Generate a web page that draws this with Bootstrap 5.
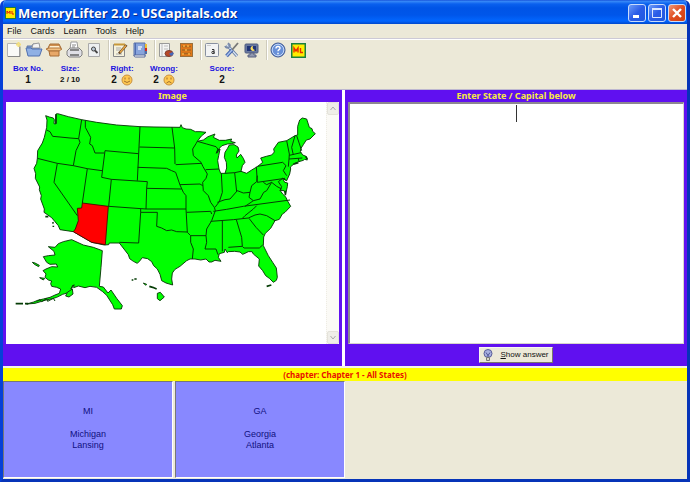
<!DOCTYPE html>
<html lang="en">
<head>
<meta charset="utf-8">
<meta name="viewport" content="width=device-width, initial-scale=1">
<title>MemoryLifter 2.0 - USCapitals.odx</title>
<link href="https://cdn.jsdelivr.net/npm/bootstrap@5.3.0/dist/css/bootstrap.min.css" rel="stylesheet">
<style>
:root{--face:#ece9d8;--violet:#6010f0}
body{font-family:"Liberation Sans",Arial,sans-serif;font-size:9px;line-height:11px;color:#111;background:#fff}
button{font:inherit;color:inherit}
.win{border:3px solid #0a48e0;border-top:0;border-left-color:#0640d8;border-right-color:#0634b8;border-bottom-color:#0634b8;border-radius:6px 6px 0 0;background:var(--face);overflow:hidden}
.titlebar{height:24px;margin:0 -3px;padding:2px 4px 0 5px;background:linear-gradient(#0a3fd0 0,#3b8cf8 1px,#0a60ee 4px,#0054e6 8px,#0056ea 15px,#0266fe 21px,#0148cc 24px)}
.titlebar h1{font-family:"Open Sans","Noto Sans",sans-serif;font-weight:700;font-size:13px;line-height:20px;color:#fff;text-shadow:1px 1px 0 #0a2a88;margin-left:2px}
.cap{width:18px;height:18px;padding:0;border:1px solid #c8dcfc;border-radius:3px;background:linear-gradient(135deg,#6c9cf8,#2a5ce8 50%,#2058e0)}
.cap.shut{background:linear-gradient(135deg,#f09878,#e04c20 50%,#d04010)}
.caps{gap:2px}
.cap svg,.tool svg,.face,.bulb,.sb svg{display:block}
.menus{height:15px;gap:9px;padding-left:4px;border-bottom:1px solid #cdcad6;box-shadow:0 1px #fff}
.menus button{border:0;padding:0;background:none}
.tools{height:23px;padding:1px 0 0 1px}
.tool{width:20px;height:20px;padding:1px;border:0;background:none}
.sep{width:6px;height:20px;border-right:1px solid #fff;background:linear-gradient(#cfcbbc,#cfcbbc) 4px 0/1px 100% no-repeat}
.scores{height:27px;padding:1px 0 0 3px;font-weight:700}
.scores dl{width:44px;text-align:center}
.scores dt{font-size:8px;color:#1a12e0;line-height:11px;white-space:nowrap}
.scores dd{font-size:10px;line-height:11px;margin:0}
.scores .mid{width:40px}
.scores .mid dd{font-size:8px}
.scores .wrong{width:40px}
.apart{margin-left:10px}
.panels{background:#fff;border-top:1px solid #bdb7d0;display:grid;grid-template-columns:113fr 114fr;gap:3px}
.pane{background:var(--violet);padding:0 3px;min-width:0}
.pane h2,.pane label{font-family:"Noto Sans",sans-serif;font-size:9px;font-weight:700;line-height:12px;color:#f8ec40;text-align:center;margin:0;display:block}
.photo{background:#fff}
.map{min-width:0}
.sb{width:13px;background:#fbfaf6;border-left:1px dotted #eeece4}
.sb button{width:12px;height:13px;padding:0;border:1px solid #e4e2da;background:#efeee8;border-radius:2px}
.answer{border:1px solid #d8d4cc;border-top:2px solid #8c8890;border-left:2px solid #8c8890;border-radius:0;resize:none;background:#fff;display:block;width:100%;height:100%;text-align:center;padding:2px;font-size:12px}
.answer:focus{outline:0}
.caret{position:absolute;top:3px;left:50%;width:1px;height:17px;background:#333}
.foot{height:22px}
.show{height:16px;padding:0 3px;background:var(--face);border:1px solid #f8f6ee;border-right-color:#78766c;border-bottom-color:#78766c;line-height:12px;gap:7px;font-size:8px}
.chapter{font-family:"Noto Sans",sans-serif;font-size:8px;background:#ff0;color:#e81000;font-weight:700;line-height:13px;border-top:2px solid #f4f2e8;text-align:center;height:15px}
.deck{padding-bottom:1px}
.cards{gap:2px}
.flash{height:97px;padding-bottom:3px;background:#8888ff;color:#101080;border:1px solid #777;border-right-color:#fff;border-bottom-color:#fff;text-align:center}
.flash p{margin:0 0 12px}
</style>
<script src="https://cdn.jsdelivr.net/npm/bootstrap@5.3.0/dist/js/bootstrap.bundle.min.js"></script>
</head>
<body>
<div class="win min-vh-100 d-flex flex-column">
  <header class="titlebar d-flex align-items-center">
    <svg width="11" height="12" viewBox="0 0 11 12" aria-hidden="true"><rect width="11" height="12" fill="#208030"/><rect x="1" y="1" width="9" height="10" fill="#ffe800"/><path d="M2 7V4l1.500 2L5 4v3M7 4v3h2" stroke="#e02000" fill="none"/></svg>
    <h1 class="mb-0 me-auto text-nowrap">MemoryLifter 2.0 - USCapitals.odx</h1>
    <div class="caps d-flex">
      <button class="cap" aria-label="Minimize"><svg width="16" height="16"><path d="M4 11.500h6" stroke="#fff" stroke-width="3"/></svg></button>
      <button class="cap" aria-label="Maximize"><svg width="16" height="16"><path d="M3.500 4.500h9v8h-9z" stroke="#dce8ff" fill="none"/><path d="M3 4h10" stroke="#dce8ff" stroke-width="2"/></svg></button>
      <button class="cap shut" aria-label="Close"><svg width="16" height="16"><path d="M4 4l8 8M12 4l-8 8" stroke="#fff" stroke-width="2.400"/></svg></button>
    </div>
  </header>

  <nav class="menus d-flex align-items-center" aria-label="Menu">
    <button>File</button><button>Cards</button><button>Learn</button><button>Tools</button><button>Help</button>
  </nav>

  <div class="tools d-flex" role="toolbar" aria-label="Tools">
    <button class="tool" aria-label="New"><svg width="18" height="18"><path d="M2.500 2.500h12v13h-12z" fill="#fafaf8" stroke="#b4b4b4"/><path d="M3 15.500h12v-10" stroke="#888" fill="none"/><path d="M13.500 1v5M11 3.500h5" stroke="#f4e080" stroke-width="2"/></svg></button>
    <button class="tool" aria-label="Open"><svg width="18" height="18"><path d="M2 5h5l1-2h6v10H3z" fill="#7c98cc" stroke="#6078a8"/><path d="M8 3l6-1 1 5H7z" fill="#f4f4f4" stroke="#999"/><path d="M1 7h5l1 1h10l-2.500 7H3z" fill="#90b0e4" stroke="#5070b0"/></svg></button>
    <button class="tool" aria-label="Pack"><svg width="18" height="18"><path d="M3 7l2-4h9l2 4z" fill="#d09050" stroke="#a87038"/><path d="M5 5h9l1 2H4z" fill="#fff0d0"/><path d="M1 8l3-1h11l2 1-3 2H4z" fill="#f4c080" stroke="#b07840"/><path d="M4 10h10v5H5z" fill="#e8a868" stroke="#a86c34"/></svg></button>
    <button class="tool" aria-label="Print"><svg width="18" height="18"><path d="M6 1h6l1 7H5z" fill="#fff" stroke="#999"/><path d="M2 10l3-3h9l3 3v4l-2 2H4l-2-2z" fill="#e0e0e6" stroke="#808080"/><path d="M5 9h9M5 14h9" stroke="#666" stroke-width="1.300"/><path d="M7 4h4M7 6h3" stroke="#888"/></svg></button>
    <button class="tool" aria-label="Preview"><svg width="18" height="18"><path d="M3.500 2.500h11v13h-11z" fill="#eef0f2" stroke="#aaa"/><circle cx="8.500" cy="8" r="2" fill="#bcc8d8" stroke="#444"/><path d="M10 9.500l2.500 2.500" stroke="#444" stroke-width="1.800"/></svg></button>
    <span class="sep"></span>
    <button class="tool" aria-label="Edit card"><svg width="18" height="18"><path d="M2.500 3.500h11v12h-11z" fill="#f6f2dc" stroke="#888"/><path d="M3 3.500h11" stroke="#c89838" stroke-width="2"/><path d="M5 7h5M5 9h4M5 13h6" stroke="#aaa"/><path d="M15.500 4L8 12.500" stroke="#604020" stroke-width="2.600"/><path d="M15 4.500L9 11.500" stroke="#e8a848" stroke-width="1.500"/></svg></button>
    <button class="tool" aria-label="Dictionary"><svg width="18" height="18"><path d="M3 2h11v13H3z" fill="#88a4dc" stroke="#5870a8"/><path d="M3 14c0 2 1 2 2 2h9v-2z" fill="#fff" stroke="#566898"/><path d="M4.500 2v12" stroke="#506cb0"/><path d="M7 6h4M7 8h3" stroke="#e8eefc" stroke-width="1.500"/><path d="M15 3v4" stroke="#f0c030" stroke-width="2"/><path d="M15 7v3" stroke="#d02820" stroke-width="2"/><path d="M15 10v3" stroke="#506ca8" stroke-width="2"/></svg></button>
    <span class="sep"></span>
    <button class="tool" aria-label="Statistics"><svg width="18" height="18"><path d="M2.500 2.500h10v13h-10z" fill="#f4f4f4" stroke="#999"/><path d="M5 3v12M7 5h4M7 8h4" stroke="#bbb"/><ellipse cx="12" cy="12.500" rx="4" ry="3" fill="#b84828" stroke="#804030"/><path d="M12 12.500l4-1.500a4 3 0 0 1-2 4z" fill="#4868b8"/></svg></button>
    <button class="tool" aria-label="Boxes"><svg width="18" height="18"><rect x="3.500" y="2.500" width="12" height="13" fill="#e07818" stroke="#98703c"/><path d="M5 5.500h9M5 9h9M5 12.500h9" stroke="#a86820" stroke-width="1.500"/><path d="M7 4v2M11 4v2M9 8v2M6 12v2M12 12v2" stroke="#f8b040" stroke-width="1.500"/></svg></button>
    <span class="sep"></span>
    <button class="tool" aria-label="Font"><svg width="18" height="18"><rect x="2.500" y="2.500" width="13" height="13" rx="1" fill="#f2f3f4" stroke="#8890a0"/><path d="M4 4.500h4" stroke="#ccc"/><circle cx="10" cy="11.500" r="1.200" fill="none" stroke="#333"/><path d="M9 8.500h2v4.500" fill="none" stroke="#333"/></svg></button>
    <button class="tool" aria-label="Options"><svg width="18" height="18"><path d="M4 4l10 11" stroke="#6078a0" stroke-width="3"/><path d="M4 4l10 11" stroke="#d8e4f4" stroke-width="1.300"/><path d="M15 2l-6 7" stroke="#777" stroke-width="1.800"/><path d="M9 9l-5.500 6" stroke="#4868b0" stroke-width="3.600"/><path d="M9 9l-5.500 6" stroke="#a8c0ec" stroke-width="1.400"/><path d="M2 5c1 3 5 2 5-1L5 2" fill="none" stroke="#7888a8" stroke-width="1.600"/></svg></button>
    <button class="tool" aria-label="Display"><svg width="18" height="18"><rect x="2" y="3" width="13" height="9" rx="1" fill="#6878a0" stroke="#505c80"/><path d="M4 5h9v5H4z" fill="#203478"/><path d="M10 5a2.500 2.500 0 1 0 2 4 3 3 0 0 1-2-4" fill="#ffe060"/><path d="M7 12h4v2h2v2H5v-2h2z" fill="#9098b0" stroke="#586080"/></svg></button>
    <span class="sep"></span>
    <button class="tool" aria-label="Help"><svg width="18" height="18"><circle cx="9" cy="9" r="7" fill="#6890d8" stroke="#405890"/><circle cx="9" cy="9" r="5.800" fill="none" stroke="#c4d8f8"/><path d="M7 7.500c0-2.600 4-2.600 4-.3C11 8.700 9 8.600 9 10.300M9 11.800v1.400" stroke="#fff" stroke-width="1.400" fill="none"/></svg></button>
    <button class="tool" aria-label="About MemoryLifter"><svg width="18" height="18"><rect x="2" y="2" width="15" height="15" fill="#188040"/><rect x="3.500" y="3.500" width="12" height="12" fill="#ffec00"/><path d="M5 11.500V7l2 3 2-3v4.500M11.500 7v4.500H14" stroke="#e83000" stroke-width="1.400" fill="none"/></svg></button>
  </div>

  <div class="scores d-flex">
    <dl class="mb-0"><dt>Box No.</dt><dd>1</dd></dl>
    <dl class="mb-0 mid"><dt>Size:</dt><dd>2 / 10</dd></dl>
    <dl class="mb-0 apart"><dt>Right:</dt><dd class="d-flex justify-content-center gap-1">2 <svg class="face" width="12" height="12" viewBox="0 0 12 12"><circle cx="6" cy="6" r="5" fill="#ffc850" stroke="#c89040"/><path d="M4 3.500v2M8 3.500v2M3 7q3 3 6 0" stroke="#a07030" fill="none"/></svg></dd></dl>
    <dl class="mb-0 wrong"><dt>Wrong:</dt><dd class="d-flex justify-content-center gap-1">2 <svg class="face" width="12" height="12" viewBox="0 0 12 12"><circle cx="6" cy="6" r="5" fill="#ffc850" stroke="#c89040"/><path d="M4 3.500v2M8 3.500v2M3.500 9q2.500-3 5 0" stroke="#a07030" fill="none"/></svg></dd></dl>
    <dl class="mb-0 ms-3"><dt>Score:</dt><dd>2</dd></dl>
  </div>

  <main class="panels flex-grow-1">
    <section class="pane d-flex flex-column">
      <h2>Image</h2>
      <div class="photo d-flex flex-grow-1">
        <svg class="map flex-grow-1" viewBox="18 309 960 726" preserveAspectRatio="xMinYMin meet" role="img" aria-label="Map of the United States with Arizona highlighted">
          <g fill="#00ff00" stroke="#063806" stroke-width="2.800" stroke-linejoin="round">
            <path d="M137 350L148 354 160 357 163 362 162 374 167 375 168 345 173 344 205 353 245 362 290 370 350 378 420 383 465 384 540 385 543 377 547 386 558 390 572 391 586 398 600 398 618 400 604 411 592 427 610 423 624 413 645 405 640 415 658 424 676 424 695 420 692 427 706 431 694 434 682 435 666 440 660 446 655 452 649 463 660 450 656 470 653 485 657 510 662 523 675 523 680 507 679 490 673 475 675 460 682 449 688 438 702 437 714 444 717 456 709 468 711 477 722 466 730 478 735 490 727 500 723 517 740 523 755 513 772 503 788 490 782 477 799 472 815 468 823 459 821 450 835 430 860 425 885 410 893 408 893 382 899 363 907 357 920 360 928 385 936 389 938 397 946 404 930 420 919 423 910 437 903 448 901 457 908 468 918 472 922 483 914 481 910 484 900 487 885 492 871 504 872 510 869 525 860 545 848 538 854 550 863 552 862 563 857 585 852 575 840 574 848 585 858 595 861 603 872 622 855 640 847 645 838 661 825 665 812 688 796 703 791 714 790 740 805 770 818 790 829 807 832 835 829 844 820 850 808 838 797 830 788 815 776 801 778 780 760 765 756 758 745 758 735 763 728 766 720 759 704 757 685 758 682 761 675 750 673 760 658 764 655 775 663 787 645 784 635 789 627 789 618 780 602 783 585 780 570 780 560 785 540 802 525 811 517 822 515 840 518 858 498 852 485 845 480 826 472 810 461 800 455 788 443 779 427 776 419 786 412 793 400 787 389 779 385 767 358 732 328 732 326 737 313 738 275 730 220 698 180 692 175 680 165 668 155 656 132 640 133 630 122 600 124 590 118 572 119 564 106 538 107 524 102 508 110 493 112 478 113 455 127 432 133 415 140 385 141 363Z"/>
            <path d="M145 743L165 745 175 734 190 728 215 722 250 738 280 745 307 755 303 805 298 862 310 864 324 882 333 873 350 898 367 920 364 930 343 930 338 917 320 889 308 878 290 865 270 862 255 866 235 861 221 866 222 857 215 868 215 875 198 883 188 886 170 895 157 899 138 903 125 907 105 913 80 915 101 909 113 904 130 900 150 895 165 888 178 883 182 870 170 865 155 862 152 854 155 846 145 843 135 835 138 825 129 815 138 810 155 803 173 804 169 795 150 796 140 790 130 773 145 770 165 768 162 757Z"/>
            <path d="M197 891L202 880 217 870 219 885 207 894ZM97 790L105 792 118 799 116 803 103 796ZM119 836L134 838 130 843ZM472 883L481 880 493 894 480 905 472 899ZM430 852L440 856 437 859Z"/>
          </g>
          <path fill="#ff0000" stroke="#400" stroke-width="2.500" d="M247 612L325 622 316 737 275 730 220 698 226 690 235 665 232 628 245 627Z"/>
          <g fill="none" stroke="#053c05" stroke-width="3" stroke-linejoin="round">
            <path d="M140 393L150 398 158 412 180 414 210 417 236 419M245 362L236 419 240 430 228 455 220 500M112 478L172 493 220 500 262 509 306 515M256 364L256 385 272 415 269 435 277 440 285 462 313 462M305 535L315 455 415 464M420 383L417 443 412 545M305 535L334 541 442 548 440 568 438 630M172 493L162 550 232 650M262 509L247 612M334 541L326 622M326 622L438 630 558 630M422 630L422 640 416 732 358 730M422 640L472 640 470 682 485 687 500 695 515 693 530 698 562 699M418 444L524 447M516 385L524 447 525 495M413 505L500 508 515 515 527 520 540 558 550 580 558 590 558 630 562 700M527 497L605 493M540 557L600 555 608 560M440 568L545 570M560 640L632 637 635 645M572 710L618 710M562 700L572 710 572 730 580 750 577 780"/>
            <path d="M592 427L588 434 578 450 580 470 603 490 609 503 622 525 618 538 608 550 610 575 625 590 632 610 643 625 646 635 635 665 620 690 618 710 620 730 615 750 648 750 654 767M617 512L657 510M592 427L620 435 648 443 655 452M664 523L667 580 658 608 645 625M704 521L710 578M675 523L704 521 723 517M652 610L675 602 690 600 712 575 730 582 750 580 755 560 770 548 772 530M769 503L772 550 855 538M772 502L848 490 858 500 850 515 860 530M750 580L747 595 760 605 780 600 791 580 800 575 815 550 800 557 790 550M760 605L750 612 735 622M640 637L680 631 730 622 870 603M632 667L700 662 745 657M770 620L760 630 735 650 728 657M745 657L765 648 780 645 800 650 825 665M747 658L768 685 790 708M667 665L667 757M709 662L725 715 727 742 685 745M727 742L732 747 778 747 788 738"/>
            <path d="M860 425L868 465 867 480 865 503M885 410L875 445 880 468M890 410L905 455M868 469L903 461M867 480L907 477M895 478L897 488M860 545L848 538 835 548 845 563 840 575M815 550L830 562 845 570"/>
            <path stroke-width="5" d="M47 914h22M75 914h10M395 843h5M403 840h7M448 862l10 3M458 865l12 5M136 653h9M157 673l4-3M160 680v4M800 862l14-4M880 496l15-5M168 346v28M917 472l5 8M856 575v14M655 450l-5 12"/>
            <path d="M110 907l10-5 5 6 15-9 3 8 17-9 5 8M212 870l7-12"/>
          </g>
        </svg>
        <div class="sb d-flex flex-column justify-content-between">
          <button aria-label="Scroll up"><svg width="10" height="11"><path d="M2.500 7L5 4l2.500 3" stroke="#aaa" fill="none"/></svg></button>
          <button aria-label="Scroll down"><svg width="10" height="11"><path d="M2.500 4L5 7l2.500-3" stroke="#aaa" fill="none"/></svg></button>
        </div>
      </div>
      <div class="foot"></div>
    </section>
    <section class="pane d-flex flex-column">
      <label for="answer">Enter State / Capital below</label>
      <div class="position-relative flex-grow-1">
        <textarea class="answer" id="answer"></textarea>
        <span class="caret"></span>
      </div>
      <div class="foot d-flex align-items-center justify-content-center">
        <button class="show d-flex align-items-center"><svg class="bulb" width="10" height="12"><circle cx="5" cy="4.500" r="4" fill="#a8b0e0" stroke="#585c98"/><path d="M3 3.500l2 3 2-3M5 6v3" stroke="#505498" fill="none"/><path d="M3.500 8.500h3v3h-3z" fill="#d8d8c8" stroke="#777"/></svg><span><u>S</u>how answer</span></button>
      </div>
    </section>
  </main>

  <div class="chapter">(chapter: Chapter 1 - All States)</div>

  <div class="deck d-flex">
    <div class="cards d-flex w-50">
      <article class="flash flex-fill w-50 d-flex flex-column justify-content-center"><p>MI</p>Michigan<br>Lansing</article>
      <article class="flash flex-fill w-50 d-flex flex-column justify-content-center"><p>GA</p>Georgia<br>Atlanta</article>
    </div>
    <div class="w-50"></div>
  </div>
</div>
</body>
</html>
